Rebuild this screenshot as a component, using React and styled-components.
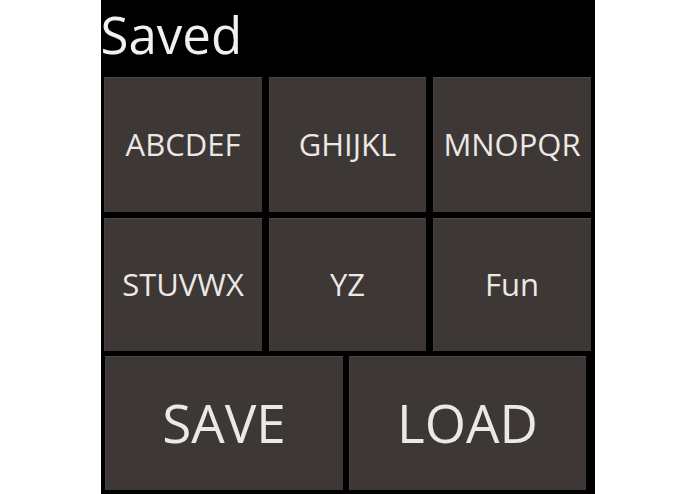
import React from 'react'
import styled, { createGlobalStyle } from 'styled-components'

const GlobalStyle = createGlobalStyle`
html, body {
  margin: 0;
  padding: 0;
  background: #ffffff;
}
body {
  font-family: 'Open Sans', 'Noto Sans', sans-serif;
}
`

const Page = styled.div`
width: 100vw;
height: 494px;
display: flex;
justify-content: center;
overflow: hidden;
`

const Panel = styled.div`
width: 494px;
height: 494px;
background-color: #000;
display: flex;
flex-direction: column;
`

const Title = styled.h1`
margin: 0;
height: 77px;
padding-left: 0;
font-size: 51px;
font-weight: 400;
line-height: 68px;
color: #f2f0ee;
box-sizing: border-box;
`

const Grid = styled.div`
display: grid;
grid-template-columns: 158px 157px 158px;
grid-template-rows: 135px 133px;
column-gap: 7px;
row-gap: 6px;
padding: 0 4px 0 3px;
`

const BottomRow = styled.div`
display: grid;
grid-template-columns: 238px 237px;
column-gap: 6px;
height: 134px;
margin-top: 5px;
padding: 0 9px 0 4px;
`

const Key = styled.button`
margin: 0;
padding: 0 0 3px;
border: none;
border-top: 1px solid #4c4644;
border-left: 1px solid #453f3d;
background-color: #3d3735;
color: #ece8e4;
font-family: 'Open Sans', 'Noto Sans', sans-serif;
font-size: ${props => props.$big ? '53px' : '31px'};
font-weight: 400;
display: flex;
align-items: center;
justify-content: center;
cursor: pointer;
`

const letters = ['ABCDEF', 'GHIJKL', 'MNOPQR', 'STUVWX', 'YZ', 'Fun']

const App = () => {
  return (
    <>
      <GlobalStyle />
      <Page>
        <Panel>
          <Title>Saved</Title>
          <Grid>
            {letters.map(l => (
              <Key key={l}>{l}</Key>
            ))}
          </Grid>
          <BottomRow>
            <Key $big>SAVE</Key>
            <Key $big>LOAD</Key>
          </BottomRow>
        </Panel>
      </Page>
    </>
  )
}

export default App
